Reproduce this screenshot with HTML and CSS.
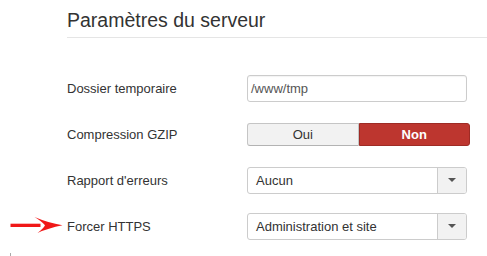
FILE: index.html
```html
<!DOCTYPE html>
<html lang="fr">
<head>
<meta charset="utf-8">
<title>Paramètres du serveur</title>
<link rel="stylesheet" href="styles.css">
</head>
<body>
<div class="page">
  <h2 class="title">Paramètres du serveur</h2>
  <div class="form">
    <div class="row">
      <div class="label">Dossier temporaire</div>
      <div class="input">/www/tmp</div>
    </div>
    <div class="row">
      <div class="label">Compression GZIP</div>
      <div class="toggle">
        <span class="opt yes">Oui</span>
        <span class="opt no">Non</span>
      </div>
    </div>
    <div class="row">
      <div class="label">Rapport d'erreurs</div>
      <div class="select">
        <span class="value">Aucun</span>
        <span class="caret-box"><span class="caret"></span></span>
      </div>
    </div>
    <div class="row">
      <svg class="arrow" width="56" height="26" viewBox="0 0 56 26" aria-hidden="true">
        <rect x="0.5" y="11.7" width="30" height="3.3" fill="#f01818"/>
        <path d="M24.5,5 Q38,10.8 52.5,13.3 Q38,16.2 27.5,21 Q33.5,16.5 35,13.3 Q32,9.5 24.5,5 Z" fill="#f01818"/>
      </svg>
      <div class="label">Forcer HTTPS</div>
      <div class="select">
        <span class="value">Administration et site</span>
        <span class="caret-box"><span class="caret"></span></span>
      </div>
    </div>
  </div>
  <span class="dot"></span>
</div>
</body>
</html>
```
FILE: styles.css
```css
html, body {
  margin: 0;
  padding: 0;
  background: #fff;
}
body {
  font-family: "Liberation Sans", Arial, sans-serif;
  color: #333;
  font-size: 13px;
}
.page {
  position: relative;
  width: 487px;
  height: 256px;
  overflow: hidden;
}
.title {
  margin: 0 0 0 67px;
  padding: 8px 0 5px;
  font-size: 19.5px;
  line-height: 24px;
  font-weight: normal;
  color: #333;
  border-bottom: 1px solid #e5e5e5;
}
.form {
  margin-top: 27px;
}
.row {
  position: relative;
  display: flex;
  align-items: center;
  height: 46px;
  padding-left: 67px;
}
.label {
  width: 180px;
  flex: none;
  color: #333;
}
.input {
  box-sizing: border-box;
  width: 220px;
  height: 27px;
  line-height: 25px;
  padding: 0 3px;
  border: 1px solid #ccc;
  border-radius: 3px;
  color: #555;
  box-shadow: inset 0 1px 1px rgba(0,0,0,0.05);
}
.toggle {
  display: flex;
  width: 223px;
  height: 23px;
}
.opt {
  box-sizing: border-box;
  flex: 1;
  height: 23px;
  line-height: 21px;
  text-align: center;
}
.yes {
  background: #f2f2f2;
  border: 1px solid #c5c5c5;
  border-bottom-color: #b3b3b3;
  border-radius: 3px 0 0 3px;
  color: #333;
}
.no {
  background: #bd362f;
  border: 1px solid #9e2b25;
  border-radius: 0 3px 3px 0;
  color: #fff;
  font-weight: bold;
}
.select {
  box-sizing: border-box;
  display: flex;
  width: 220px;
  height: 27px;
  border: 1px solid #ccc;
  border-radius: 3px;
  overflow: hidden;
}
.value {
  flex: 1;
  line-height: 25px;
  padding-left: 8px;
  color: #333;
}
.caret-box {
  display: flex;
  align-items: center;
  justify-content: center;
  width: 28px;
  background: #f2f2f2;
  border-left: 1px solid #ccc;
}
.caret {
  width: 0;
  height: 0;
  border-left: 4px solid transparent;
  border-right: 4px solid transparent;
  border-top: 4px solid #555;
}
.arrow {
  position: absolute;
  left: 10px;
  top: 9px;
}
.dot {
  position: absolute;
  left: 10px;
  top: 253px;
  width: 1px;
  height: 3px;
  background: #aaa;
}
```
